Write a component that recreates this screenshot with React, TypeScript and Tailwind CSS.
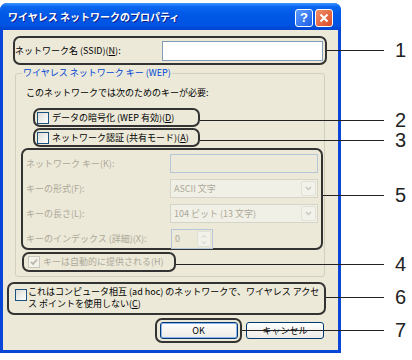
import type { ReactNode } from "react";

const callouts = [
	{ n: "1", y: 50, x: 327 },
	{ n: "2", y: 120, x: 200 },
	{ n: "3", y: 140, x: 200 },
	{ n: "5", y: 195, x: 323 },
	{ n: "4", y: 264, x: 176 },
	{ n: "6", y: 297, x: 326 },
	{ n: "7", y: 330, x: 242 },
];

function CheckBox({ checked, disabled }: { checked?: boolean; disabled?: boolean }) {
	return (
		<span
			className={`flex h-[12px] w-[12px] shrink-0 items-center justify-center border ${
				disabled
					? "border-[#CAC8BB] bg-[#F3F2EA]"
					: "border-[#1C5180] bg-[linear-gradient(135deg,#DCDCD7,#FFFFFF)]"
			}`}
		>
			{checked && (
				<svg width="8" height="8" viewBox="0 0 8 8">
					<path d="M1 4 L3 6 L7 1.5" fill="none" stroke="#B5B2A3" strokeWidth="1.6" />
				</svg>
			)}
		</span>
	);
}

function DropButton() {
	return (
		<span className="flex h-[15px] w-[15px] items-center justify-center rounded-[2px] border border-[#E2E1D6] bg-[#F2F1EA]">
			<svg width="7" height="5" viewBox="0 0 7 5">
				<path d="M1 1 L3.5 3.5 L6 1" fill="none" stroke="#C9C7BA" strokeWidth="1.4" />
			</svg>
		</span>
	);
}

function KeyRow({ label, children }: { label: string; children: ReactNode }) {
	return (
		<div className="flex items-center justify-between">
			<span className="text-[#ACA899]">{label}</span>
			{children}
		</div>
	);
}

export default function App() {
	return (
		<div className="relative h-[360px] w-[412px] overflow-hidden bg-white font-['Noto_Sans_CJK_JP',sans-serif] text-[9px] leading-[12px] text-black">
			{/* Dialog window */}
			<div className="mt-[3px] flex h-[350px] w-[341px] flex-col rounded-t-[7px] bg-[#0846D8]">
				{/* Title bar */}
				<div className="flex h-[27px] items-center justify-between rounded-t-[7px] bg-[linear-gradient(180deg,#3D95FF_0%,#0A66F0_14%,#0058E6_45%,#0054E3_80%,#0044D0_100%)] pl-[8px] pr-[8px]">
					<span className="text-[10px] font-bold text-white [text-shadow:1px_1px_0_#0A1E8A]">
						ワイヤレス ネットワークのプロパティ
					</span>
					<div className="mt-[3px] flex gap-[2px]">
						<span className="flex h-[18px] w-[18px] items-center justify-center rounded-[3px] border border-white bg-[linear-gradient(135deg,#5C9CFF,#1C5FE8)] font-['Liberation_Sans',sans-serif] text-[13px] font-bold text-white">
							?
						</span>
						<span className="flex h-[18px] w-[18px] items-center justify-center rounded-[3px] border border-white bg-[linear-gradient(135deg,#F0906B,#D94A24)]">
							<svg width="10" height="10" viewBox="0 0 10 10">
								<path d="M1.5 1.5 L8.5 8.5 M8.5 1.5 L1.5 8.5" stroke="white" strokeWidth="2" />
							</svg>
						</span>
					</div>
				</div>

				{/* Body */}
				<div className="mx-[3px] mb-[3px] flex flex-1 flex-col bg-[#ECE9D8]">
					{/* SSID */}
					<div className="ml-[10px] mt-[6px] flex h-[29px] w-[314px] items-center justify-between rounded-[7px] border-2 border-[#333] pr-[2px]">
						<span>ネットワーク名 (SSID)(<span className="underline">N</span>):</span>
						<span className="h-[20px] w-[161px] border border-[#7F9DB9] bg-white" />
					</div>

					{/* WEP group */}
					<div className="relative ml-[12px] mt-[8px] flex h-[204px] w-[310px] flex-col rounded-[3px] border border-[#D0D0BF]">
						<span className="absolute -top-[7px] left-[6px] bg-[#ECE9D8] px-[1px] text-[#0046D5]">
							ワイヤレス ネットワーク キー (WEP)
						</span>
						<span className="ml-[10px] mt-[13px]">このネットワークでは次のためのキーが必要:</span>

						<div className="ml-[17px] mt-[9px] flex h-[19px] w-[167px] items-center gap-[3px] rounded-[7px] border-2 border-[#333] pl-[2px]">
							<CheckBox />
							<span>データの暗号化 (WEP 有効)(<span className="underline">D</span>)</span>
						</div>
						<div className="ml-[17px] mt-[1px] flex h-[19px] w-[167px] items-center gap-[3px] rounded-[7px] border-2 border-[#333] pl-[2px]">
							<CheckBox />
							<span>ネットワーク認証 (共有モード)(<span className="underline">A</span>)</span>
						</div>

						{/* Key settings */}
						<div className="ml-[5px] mt-[1px] flex h-[102px] w-[302px] flex-col gap-[6px] rounded-[7px] border-2 border-[#333] pl-[3px] pr-[3px] pt-[4px]">
							<KeyRow label="ネットワーク キー(K):">
								<span className="h-[19px] w-[148px] border border-[#B4C6D8] bg-[#ECE9D8]" />
							</KeyRow>
							<KeyRow label="キーの形式(F):">
								<span className="flex h-[19px] w-[148px] items-center justify-between border border-[#D6D4C8] bg-[#F1F0E6] pl-[3px] pr-[1px] text-[#ACA899]">
									ASCII 文字
									<DropButton />
								</span>
							</KeyRow>
							<KeyRow label="キーの長さ(L):">
								<span className="flex h-[19px] w-[148px] items-center justify-between border border-[#D6D4C8] bg-[#F1F0E6] pl-[3px] pr-[1px] text-[#ACA899]">
									104 ビット (13 文字)
									<DropButton />
								</span>
							</KeyRow>
							<div className="mr-[105px] flex h-[20px] items-center justify-between">
								<span className="text-[#ACA899]">キーのインデックス (詳細)(X):</span>
								<span className="flex h-[20px] w-[42px] items-center justify-between border border-[#B4C6D8] bg-[#ECE9D8] pl-[3px] pr-[1px] text-[#ACA899]">
									0
									<span className="flex h-[16px] w-[14px] flex-col items-center justify-center gap-[3px] rounded-[2px] border border-[#E2E1D6] bg-[#F2F1EA]">
										<svg width="6" height="3" viewBox="0 0 6 3">
											<path d="M1 2.5 L3 0.5 L5 2.5" fill="none" stroke="#C9C7BA" strokeWidth="1" />
										</svg>
										<svg width="6" height="3" viewBox="0 0 6 3">
											<path d="M1 0.5 L3 2.5 L5 0.5" fill="none" stroke="#C9C7BA" strokeWidth="1" />
										</svg>
									</span>
								</span>
							</div>
						</div>

						<div className="ml-[6px] mt-[2px] flex h-[20px] w-[154px] items-center gap-[3px] rounded-[7px] border-2 border-[#333] pl-[4px]">
							<CheckBox checked disabled />
							<span className="text-[#ACA899]">キーは自動的に提供される(H)</span>
						</div>
					</div>

					{/* Ad hoc */}
					<div className="ml-[4px] mt-[5px] flex h-[33px] w-[319px] items-start gap-[1px] rounded-[7px] border-2 border-[#333] pl-[6px]">
						<span className="mt-[5px]">
							<CheckBox />
						</span>
						<span className="mt-[2px] whitespace-nowrap leading-[12px]">
							これはコンピュータ相互 (ad hoc) のネットワークで、ワイヤレス アクセ
							<br />
							ス ポイントを使用しない(<span className="underline">C</span>)
						</span>
					</div>

					{/* Buttons */}
					<div className="mt-[3px] flex items-center">
						<div className="ml-[152px] flex h-[25px] w-[87px] items-center justify-center rounded-[7px] border-2 border-[#333]">
							<span className="flex h-[17px] w-[78px] items-center justify-center rounded-[3px] border border-[#003C74] bg-[linear-gradient(180deg,#FFFFFF,#ECEBE6)] shadow-[inset_0_0_0_1px_#8FB4F0]">
								OK
							</span>
						</div>
						<span className="ml-[4px] flex h-[17px] w-[78px] items-center justify-center rounded-[3px] border border-[#003C74] bg-[linear-gradient(180deg,#FFFFFF,#ECEBE6)]">
							キャンセル
						</span>
					</div>
				</div>
			</div>

			{/* Callout leader lines and numbers */}
			{callouts.map((c) => (
				<div key={c.n}>
					<div
						className="absolute h-[1px] bg-[#222]"
						style={{ left: c.x, top: c.y, width: 384 - c.x }}
					/>
					<span
						className="absolute left-[395px] font-['Liberation_Sans',Arial,sans-serif] text-[20px] leading-[20px] text-[#222]"
						style={{ top: c.y - 10 }}
					>
						{c.n}
					</span>
				</div>
			))}
		</div>
	);
}
